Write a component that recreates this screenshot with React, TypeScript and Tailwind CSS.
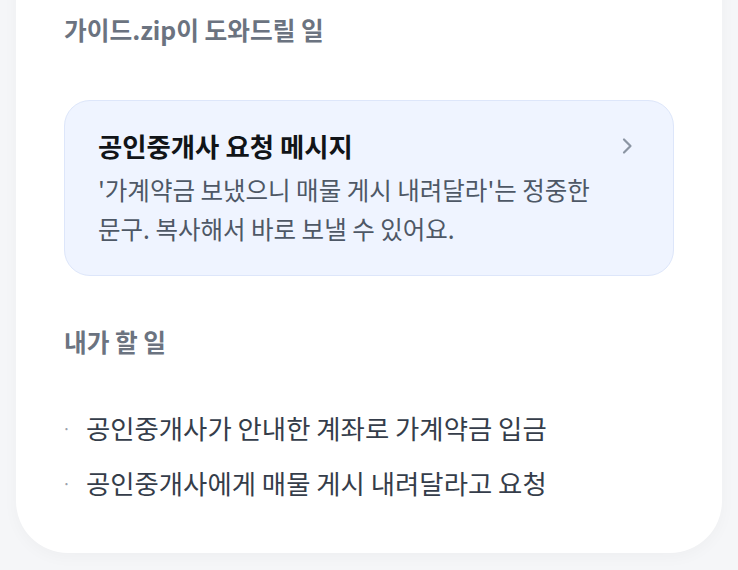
import React from "react";

const font = { fontFamily: '"Noto Sans CJK KR", "Noto Sans", sans-serif' };

function ChevronRight() {
  return (
    <svg width="24" height="24" viewBox="0 0 24 24" fill="none" stroke="#8b95a3" strokeWidth="2.2" strokeLinecap="round" strokeLinejoin="round">
      <path d="M9 5.5l6.5 6.5-6.5 6.5" />
    </svg>
  );
}

export default function App() {
  const todos = ["공인중개사가 안내한 계좌로 가계약금 입금", "공인중개사에게 매물 게시 내려달라고 요청"];

  return (
    <div className="w-[738px] h-[570px] overflow-hidden bg-[#f5f6f8]" style={font}>
      <div className="mx-4 -mt-[40px] h-[593px] rounded-b-[52px] bg-white shadow-[0_4px_16px_rgba(0,0,0,0.03)] px-12 pt-[50px]">
        <h2 className="text-[24.7px] font-bold text-[#6b7380] leading-[38px]">가이드.zip이 도와드릴 일</h2>

        <div className="mt-[52px] rounded-[26px] border border-[#dde6fa] bg-[#eff4ff] pl-[33px] pr-[34px] pt-[26px] pb-[27px]">
          <div className="flex items-center justify-between">
            <div className="text-[26.4px] font-bold text-[#111418] leading-[38px]">공인중개사 요청 메시지</div>
            <ChevronRight />
          </div>
          <p className="mt-[5px] text-[24.5px] text-[#4e5866] leading-[39px]">
            '가계약금 보냈으니 매물 게시 내려달라'는 정중한
            <br />
            문구. 복사해서 바로 보낼 수 있어요.
          </p>
        </div>

        <h3 className="mt-[46px] text-[24.7px] font-bold text-[#6b7380] leading-[38px]">내가 할 일</h3>

        <ul className="mt-[49px] flex flex-col gap-[17px]">
          {todos.map((t) => (
            <li key={t} className="flex items-center text-[26.4px] text-[#353d4a] leading-[38px]">
              <span className="w-[24px] -ml-[2px] text-[#9aa1ab] text-[16px]">·</span>
              {t}
            </li>
          ))}
        </ul>
      </div>
    </div>
  );
}
